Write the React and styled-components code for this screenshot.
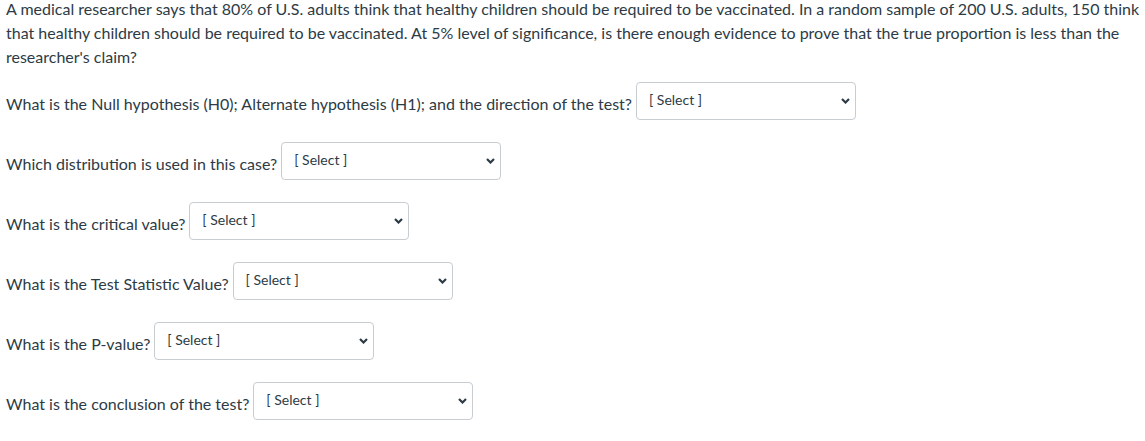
import React from "react";
import styled, { createGlobalStyle } from "styled-components";

const GlobalStyle = createGlobalStyle`
  html, body {
    margin: 0;
    padding: 0;
    background: #ffffff;
  }
  body {
    font-family: Lato, "Noto Sans", sans-serif;
    color: #2d3b45;
  }
`;

const Page = styled.div`
  padding: 0 0 0 6px;
  margin-top: -3px;
  font-size: 16px;
  line-height: 24px;
`;

const Prompt = styled.p`
  margin: 0 0 13px 0;
`;

const Questions = styled.div`
  display: flex;
  flex-direction: column;
  gap: 22px;
`;

const Row = styled.div`
  display: flex;
  align-items: center;
  gap: 4px;
  height: 38px;
`;

const Label = styled.span`
  padding-top: 6px;
  white-space: nowrap;
`;

const SelectWrap = styled.div`
  position: relative;
  width: 220px;
  height: 38px;
`;

const Select = styled.select`
  appearance: none;
  -webkit-appearance: none;
  box-sizing: border-box;
  width: 100%;
  height: 100%;
  margin: 0;
  padding: 0 24px 3px 12px;
  border: 1px solid #c7cdd1;
  border-radius: 4px;
  background: #ffffff;
  font-family: Lato, "Noto Sans", sans-serif;
  font-size: 14px;
  color: #2d3b45;
  outline: none;
`;

const Chevron = styled.svg`
  position: absolute;
  right: 6px;
  top: 50%;
  width: 9px;
  height: 6px;
  margin-top: -3px;
  pointer-events: none;
`;

const questions = [
  "What is the Null hypothesis (H0); Alternate hypothesis (H1); and the direction of the test?",
  "Which distribution is used in this case?",
  "What is the critical value?",
  "What is the Test Statistic Value?",
  "What is the P-value?",
  "What is the conclusion of the test?",
];

const Dropdown = () => (
  <SelectWrap>
    <Select defaultValue="">
      <option value="">[ Select ]</option>
    </Select>
    <Chevron viewBox="0 0 9 6">
      <path d="M1 1 L4.5 4.5 L8 1" fill="none" stroke="#2d3b45" strokeWidth="2.2" />
    </Chevron>
  </SelectWrap>
);

const App = () => (
  <>
    <GlobalStyle />
    <Page>
      <Prompt>
        A medical researcher says that 80% of U.S. adults think that healthy children should be
        required to be vaccinated. In a random sample of 200 U.S. adults, 150 think that healthy
        children should be required to be vaccinated. At 5% level of significance, is there enough
        evidence to prove that the true proportion is less than the researcher's claim?
      </Prompt>
      <Questions>
        {questions.map((q) => (
          <Row key={q}>
            <Label>{q}</Label>
            <Dropdown />
          </Row>
        ))}
      </Questions>
    </Page>
  </>
);

export default App;
